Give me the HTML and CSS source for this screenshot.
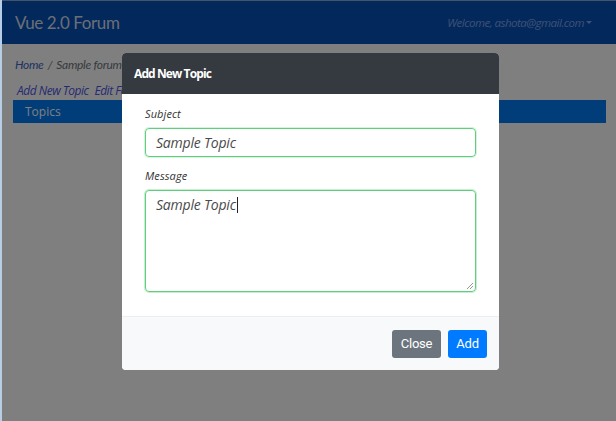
FILE: index.html
```html
<!DOCTYPE html>
<html>
<head>
<meta charset="utf-8">
<link rel="stylesheet" href="styles.css">
</head>
<body>
<div class="page">
  <nav class="navbar">
    <span class="brand">Vue 2.0 Forum</span>
    <span class="welcome">Welcome, ashota@gmail.com <span class="caret"></span></span>
  </nav>
  <div class="content">
    <div class="breadcrumb"><span class="link">Home</span><span class="sep">/</span><span>Sample forum</span></div>
    <div class="actions"><span class="link">Add New Topic</span><span class="link">Edit Forum</span></div>
    <div class="topics">Topics</div>
  </div>
</div>
<div class="backdrop"></div>
<div class="modal">
  <div class="modal-header">Add New Topic</div>
  <div class="modal-body">
    <label class="label">Subject</label>
    <div class="input">Sample Topic</div>
    <label class="label">Message</label>
    <div class="textarea">Sample Topic<span class="cursor"></span>
      <svg class="grip" width="8" height="8" viewBox="0 0 8 8"><path d="M7 1 L1 7 M7 4 L4 7" stroke="#999" stroke-width="1"/></svg>
    </div>
  </div>
  <div class="modal-footer">
    <span class="btn btn-close">Close</span>
    <span class="btn btn-add">Add</span>
  </div>
</div>
</body>
</html>
```
FILE: styles.css
```css
html, body {
  margin: 0;
  padding: 0;
  width: 616px;
  height: 421px;
  overflow: hidden;
  font-family: "Open Sans", Lato, sans-serif;
}
body {
  background: #fff;
  border-left: 2px solid #b8cde6;
  box-sizing: border-box;
  position: relative;
}
.page {
  height: 421px;
}
.navbar {
  height: 44px;
  background: #0651b8;
  display: flex;
  align-items: center;
  justify-content: space-between;
  padding: 0 24px 0 13px;
  border-top: 1px solid #8fa9cf;
  box-sizing: border-box;
}
.brand {
  color: #d4deee;
  font-family: Lato, sans-serif;
  font-size: 17px;
  letter-spacing: -0.4px;
}
.welcome {
  color: #7fa2e8;
  font-size: 11.5px;
  font-style: italic;
  letter-spacing: -0.5px;
  display: flex;
  align-items: center;
  gap: 2px;
}
.caret {
  width: 0;
  height: 0;
  border-left: 3px solid transparent;
  border-right: 3px solid transparent;
  border-top: 3px solid #7fa2e8;
}
.content {
  padding: 11px 10px 0 11px;
}
.breadcrumb {
  font-family: Lato, sans-serif;
  font-size: 12px;
  font-style: italic;
  color: #6c757d;
  display: flex;
  gap: 4px;
  height: 18px;
  align-items: center;
  padding-left: 2px;
  letter-spacing: -0.3px;
}
.breadcrumb .link { color: #3a66c4; }
.actions {
  margin-top: 9px;
  font-size: 12px;
  font-style: italic;
  display: flex;
  gap: 6px;
  height: 17px;
  align-items: center;
  padding-left: 4px;
}
.actions .link { color: #4d55e6; letter-spacing: -0.5px; }
.topics {
  margin-top: 1px;
  height: 23px;
  background: #007af2;
  color: #ffffff;
  font-size: 12px;
  display: flex;
  align-items: center;
  padding-left: 12px;
}
.backdrop {
  position: absolute;
  inset: 0;
  background: rgba(0, 0, 0, 0.5);
}
.modal {
  position: absolute;
  left: 120px;
  top: 53px;
  width: 377px;
  background: #fff;
  border-radius: 4px;
  overflow: hidden;
}
.modal-header {
  height: 41px;
  background: #343a40;
  color: #fff;
  font-weight: bold;
  font-size: 12px;
  letter-spacing: -0.9px;
  display: flex;
  align-items: center;
  padding-left: 12px;
}
.modal-body {
  padding: 13px 23px 24px 23px;
  display: flex;
  flex-direction: column;
}
.label {
  font-size: 11px;
  font-style: italic;
  color: #333;
  height: 14px;
  line-height: 14px;
  margin-bottom: 7px;
  letter-spacing: 0.1px;
}
.input {
  height: 29px;
  box-sizing: border-box;
  border: 1px solid #5fcf7e;
  border-radius: 4px;
  box-shadow: 0 0 0 1px rgba(95, 207, 126, 0.25);
  font-size: 14px;
  font-style: italic;
  color: #4a4a4a;
  padding-left: 10px;
  display: flex;
  align-items: center;
  margin-bottom: 12px;
  letter-spacing: -0.2px;
}
.textarea {
  height: 102px;
  box-sizing: border-box;
  border: 1px solid #5fcf7e;
  border-radius: 4px;
  box-shadow: 0 0 0 1px rgba(95, 207, 126, 0.35);
  font-size: 14px;
  font-style: italic;
  color: #4a4a4a;
  padding: 4px 10px;
  position: relative;
  line-height: 20px;
  letter-spacing: -0.2px;
}
.cursor {
  display: inline-block;
  width: 1px;
  height: 16px;
  background: #222;
  vertical-align: -3px;
  margin-left: 1px;
}
.grip {
  position: absolute;
  right: 1px;
  bottom: 1px;
}
.modal-footer {
  height: 54px;
  box-sizing: border-box;
  background: #f8f9fa;
  border-top: 1px solid #eceef0;
  display: flex;
  align-items: center;
  justify-content: flex-end;
  gap: 7px;
  padding-right: 12px;
}
.btn {
  height: 28px;
  border-radius: 3px;
  color: #fff;
  font-family: Roboto, sans-serif;
  font-size: 13px;
  display: flex;
  align-items: center;
  justify-content: center;
  letter-spacing: -0.2px;
}
.btn-close {
  width: 49px;
  background: #6c757d;
}
.btn-add {
  width: 39px;
  background: #007bff;
}
```
